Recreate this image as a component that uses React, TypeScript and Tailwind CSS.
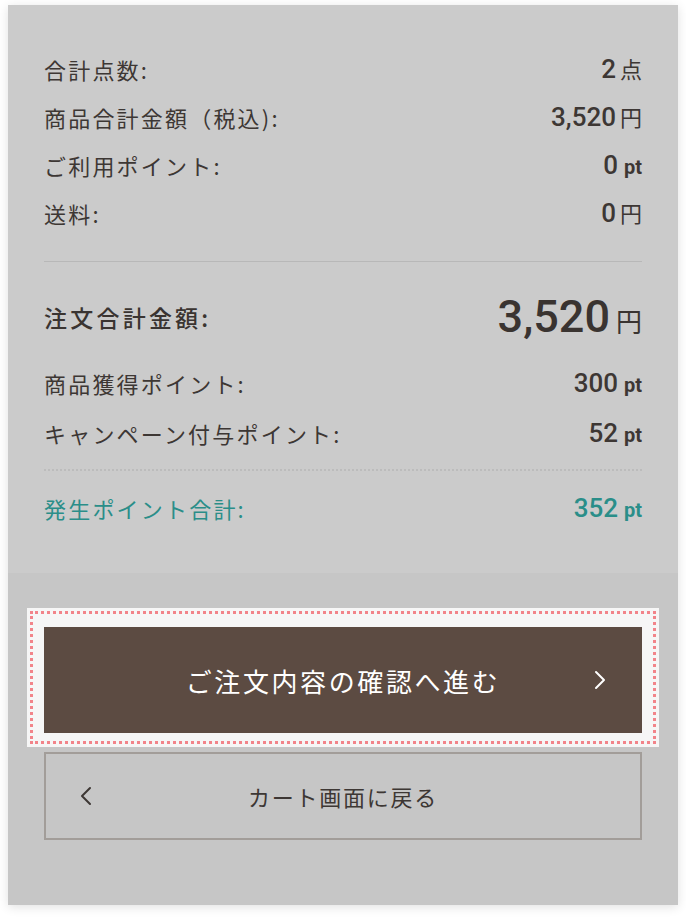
const jp = { fontFamily: '"Noto Sans CJK JP", "Noto Sans", sans-serif' };
const num = { fontFamily: 'Roboto, "Noto Sans CJK JP", sans-serif' };

function Row({
  label,
  value,
  unit,
  h = 'h-[48px]',
  tone = 'text-[#3d3734]',
}: {
  label: string;
  value: string;
  unit: string;
  h?: string;
  tone?: string;
}) {
  return (
    <div className={`flex items-center justify-between ${h} ${tone}`}>
      <span className="text-[22px] tracking-[0.1em]" style={jp}>
        {label}
      </span>
      <span className="flex items-baseline" style={num}>
        <span className="text-[26px] font-medium">{value}</span>
        {unit === 'pt' ? (
          <span className="ml-[6px] text-[20px] font-bold">pt</span>
        ) : (
          <span className="ml-[4px] text-[22px]" style={jp}>
            {unit}
          </span>
        )}
      </span>
    </div>
  );
}

function ChevronRight() {
  return (
    <svg width="12" height="20" viewBox="0 0 12 20" fill="none">
      <path d="M2 2l8 8-8 8" stroke="currentColor" strokeWidth="2" strokeLinecap="round" strokeLinejoin="round" />
    </svg>
  );
}

function ChevronLeft() {
  return (
    <svg width="12" height="20" viewBox="0 0 12 20" fill="none">
      <path d="M10 2l-8 8 8 8" stroke="currentColor" strokeWidth="2" strokeLinecap="round" strokeLinejoin="round" />
    </svg>
  );
}

export default function App() {
  return (
    <div className="min-h-screen bg-white pl-[8px] pt-[5px]">
      <div className="w-[670px] shadow-[0_2px_10px_rgba(0,0,0,0.12)]">
        <section className="bg-[#cbcbcb] px-[36px] pt-[40px] pb-[40px]">
          <Row label="合計点数:" value="2" unit="点" />
          <Row label="商品合計金額（税込):" value="3,520" unit="円" />
          <Row label="ご利用ポイント:" value="0" unit="pt" />
          <Row label="送料:" value="0" unit="円" />

          <div className="mt-[24px] border-t border-[#b8b8b8]" />

          <div className="mt-[24px] flex h-[62px] items-center justify-between text-[#3a3431]">
            <span className="text-[23px] font-medium tracking-[0.14em]" style={jp}>
              注文合計金額:
            </span>
            <span className="flex items-baseline" style={num}>
              <span className="text-[45px] font-medium leading-none">3,520</span>
              <span className="ml-[6px] text-[26px]" style={jp}>
                円
              </span>
            </span>
          </div>

          <div className="mt-[10px]">
            <Row label="商品獲得ポイント:" value="300" unit="pt" h="h-[50px]" />
            <Row label="キャンペーン付与ポイント:" value="52" unit="pt" h="h-[50px]" />
          </div>

          <div className="mt-[11px] border-t-2 border-dotted border-[#bcbcbc]" />

          <div className="mt-[12px]">
            <Row label="発生ポイント合計:" value="352" unit="pt" h="h-[50px]" tone="text-[#2a8e89]" />
          </div>
        </section>

        <section className="bg-[#c6c6c6] px-[36px] pt-[35px] pb-[65px]">
          <div className="relative -mx-[17px] bg-[#f6f6f6] px-[17px] pt-[19px] pb-[14px]">
            <div className="pointer-events-none absolute inset-[3px] border-[3px] border-dotted border-[#f2848a]" />
            <button className="relative flex h-[106px] w-full items-center justify-center bg-[#5c4b42] text-white">
              <span className="text-[26px] tracking-[0.1em]" style={jp}>
                ご注文内容の確認へ進む
              </span>
              <span className="absolute right-[36px] top-1/2 -translate-y-1/2">
                <ChevronRight />
              </span>
            </button>
          </div>

          <button className="relative mt-[5px] flex h-[88px] w-full items-center justify-center border-2 border-[#a29d99] text-[#3d3734]">
            <span className="absolute left-[34px] top-1/2 -translate-y-1/2">
              <ChevronLeft />
            </span>
            <span className="text-[22px] tracking-[0.08em]" style={jp}>
              カート画面に戻る
            </span>
          </button>
        </section>
      </div>
    </div>
  );
}
